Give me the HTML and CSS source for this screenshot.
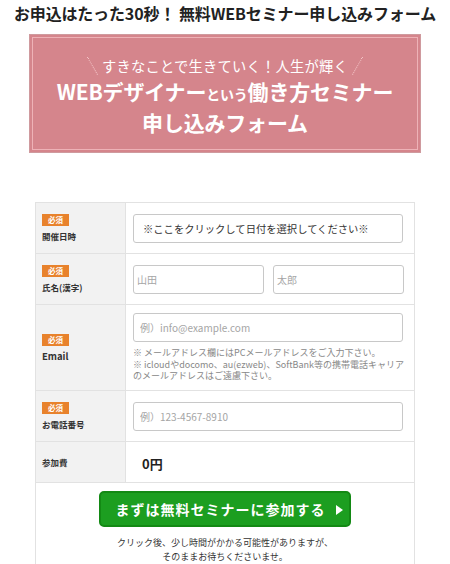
FILE: index.html
```html
<!DOCTYPE html>
<html lang="ja">
<head>
	<meta charset="UTF-8">
	<title>無料WEBセミナー申し込みフォーム</title>
	<link rel="stylesheet" href="styles.css">
</head>
<body>
	<h1 class="pageTitle">お申込はたった30秒！ 無料WEBセミナー申し込みフォーム</h1>
	<div class="banner">
		<p class="bannerLead"><span class="leadText">すきなことで生きていく！人生が輝く</span></p>
		<p class="bannerMain">WEBデザイナー<small>という</small>働き方セミナー</p>
		<p class="bannerMain">申し込みフォーム</p>
	</div>
	<table class="entryForm">
		<tr class="rowShort">
			<th><span class="must">必須</span>開催日時</th>
			<td><input type="text" class="txt full dateTxt" value="※ここをクリックして日付を選択してください※"></td>
		</tr>
		<tr class="rowShort">
			<th><span class="must">必須</span>氏名(漢字)</th>
			<td>
				<div class="nameBox">
					<input type="text" class="txt" placeholder="山田">
					<input type="text" class="txt" placeholder="太郎">
				</div>
			</td>
		</tr>
		<tr class="rowMail">
			<th><span class="must">必須</span><span class="en">Email</span></th>
			<td>
				<input type="text" class="txt full" placeholder="例）info@example.com">
				<p class="note">※ メールアドレス欄にはPCメールアドレスをご入力下さい。<br>※ icloudやdocomo、au(ezweb)、SoftBank等の携帯電話キャリアのメールアドレスはご遠慮下さい。</p>
			</td>
		</tr>
		<tr class="rowShort">
			<th><span class="must">必須</span>お電話番号</th>
			<td><input type="text" class="txt full" placeholder="例）123-4567-8910"></td>
		</tr>
		<tr class="rowFee">
			<th>参加費</th>
			<td><span class="fee">0円</span></td>
		</tr>
		<tr>
			<td colspan="2" class="submitCell">
				<button type="button" class="btnSubmit">まずは無料セミナーに参加する <span class="arrow"></span></button>
				<p class="wait">クリック後、少し時間がかかる可能性がありますが、<br>そのままお待ちくださいませ。</p>
			</td>
		</tr>
	</table>
</body>
</html>
```

FILE: styles.css
```css
* { padding: 0; margin: 0; box-sizing: border-box; }
body { background: #fff; color: #333; font-family: "Noto Sans CJK JP", "Noto Sans", sans-serif; }

.pageTitle { font-size: 16px; font-weight: bold; color: #222; text-align: center; line-height: 20px; padding-top: 3px; white-space: nowrap; letter-spacing: -0.1px; }

.banner { width: 392px; height: 119px; margin: 11px auto 0; background: #d5858c; border: 1px solid #cf9a9e; box-shadow: inset 0 0 0 2px #d5858c, inset 0 0 0 3px #eeb2b7; color: #fff; text-align: center; padding-top: 20px; }
.bannerLead { font-size: 14.3px; line-height: 22px; letter-spacing: 0.2px; }
.leadText { position: relative; }
.leadText:before, .leadText:after { content: ""; position: absolute; top: 1px; width: 0; height: 20px; border-left: 1px dotted #f3c3c6; }
.leadText:before { left: -10px; transform: rotate(-30deg); }
.leadText:after { right: -10px; transform: rotate(30deg); }
.bannerMain { font-size: 21px; font-weight: bold; line-height: 28px; letter-spacing: -0.2px; }
.bannerMain small { font-size: 14px; }

.entryForm { width: 380px; margin: 49px auto 0; border-collapse: collapse; border: 1px solid #e2e2e2; }
.entryForm th, .entryForm td { border: 1px solid #e2e2e2; }
.entryForm th { width: 90px; background: #f2f2f2; text-align: left; font-size: 8.5px; font-weight: bold; color: #333; padding: 0 0 0 6px; vertical-align: middle; line-height: 12px; }
.entryForm td { padding: 0 10px 0 7px; vertical-align: middle; }
.rowShort { height: 51px; }
.rowMail { height: 86px; }
.rowFee { height: 41px; }

.must { display: block; width: 27px; height: 12px; margin-bottom: 4px; background: #e8822c; color: #fff; font-size: 7.5px; line-height: 12px; text-align: center; }
.en { font-size: 9.5px; }

.txt { height: 29px; border: 1px solid #c8c8c8; border-radius: 3px; padding: 0 6px; font-family: "Noto Sans CJK JP", "Noto Sans", sans-serif; font-size: 10px; color: #333; background: #fff; }
.txt::placeholder { color: #a5a5a5; }
.full { display: block; width: 270px; }
.dateTxt { font-size: 10.3px; padding-left: 9px; color: #333; }
.nameBox { display: flex; gap: 9px; }
.nameBox .txt { width: 131px; padding-left: 3px; }

.note { margin-top: 5px; font-size: 9px; line-height: 11.5px; color: #888; }
.fee { padding-left: 9px; font-size: 13px; font-weight: bold; color: #222; }

.submitCell { padding: 8px 0 0 !important; text-align: center; vertical-align: top !important; height: 90px; }
.btnSubmit { display: block; width: 252px; height: 36px; margin: 0 auto; background: #1c9e20; border: 2px solid #138914; border-radius: 5px; color: #fff; font-family: "Noto Sans CJK JP", "Noto Sans", sans-serif; font-size: 14px; font-weight: bold; letter-spacing: 1px; padding-left: 8px; }
.arrow { display: inline-block; width: 0; height: 0; margin-left: 6px; border-left: 7px solid #fff; border-top: 5px solid transparent; border-bottom: 5px solid transparent; }
.wait { margin-top: 9px; font-size: 9px; line-height: 14px; color: #333; }
```
